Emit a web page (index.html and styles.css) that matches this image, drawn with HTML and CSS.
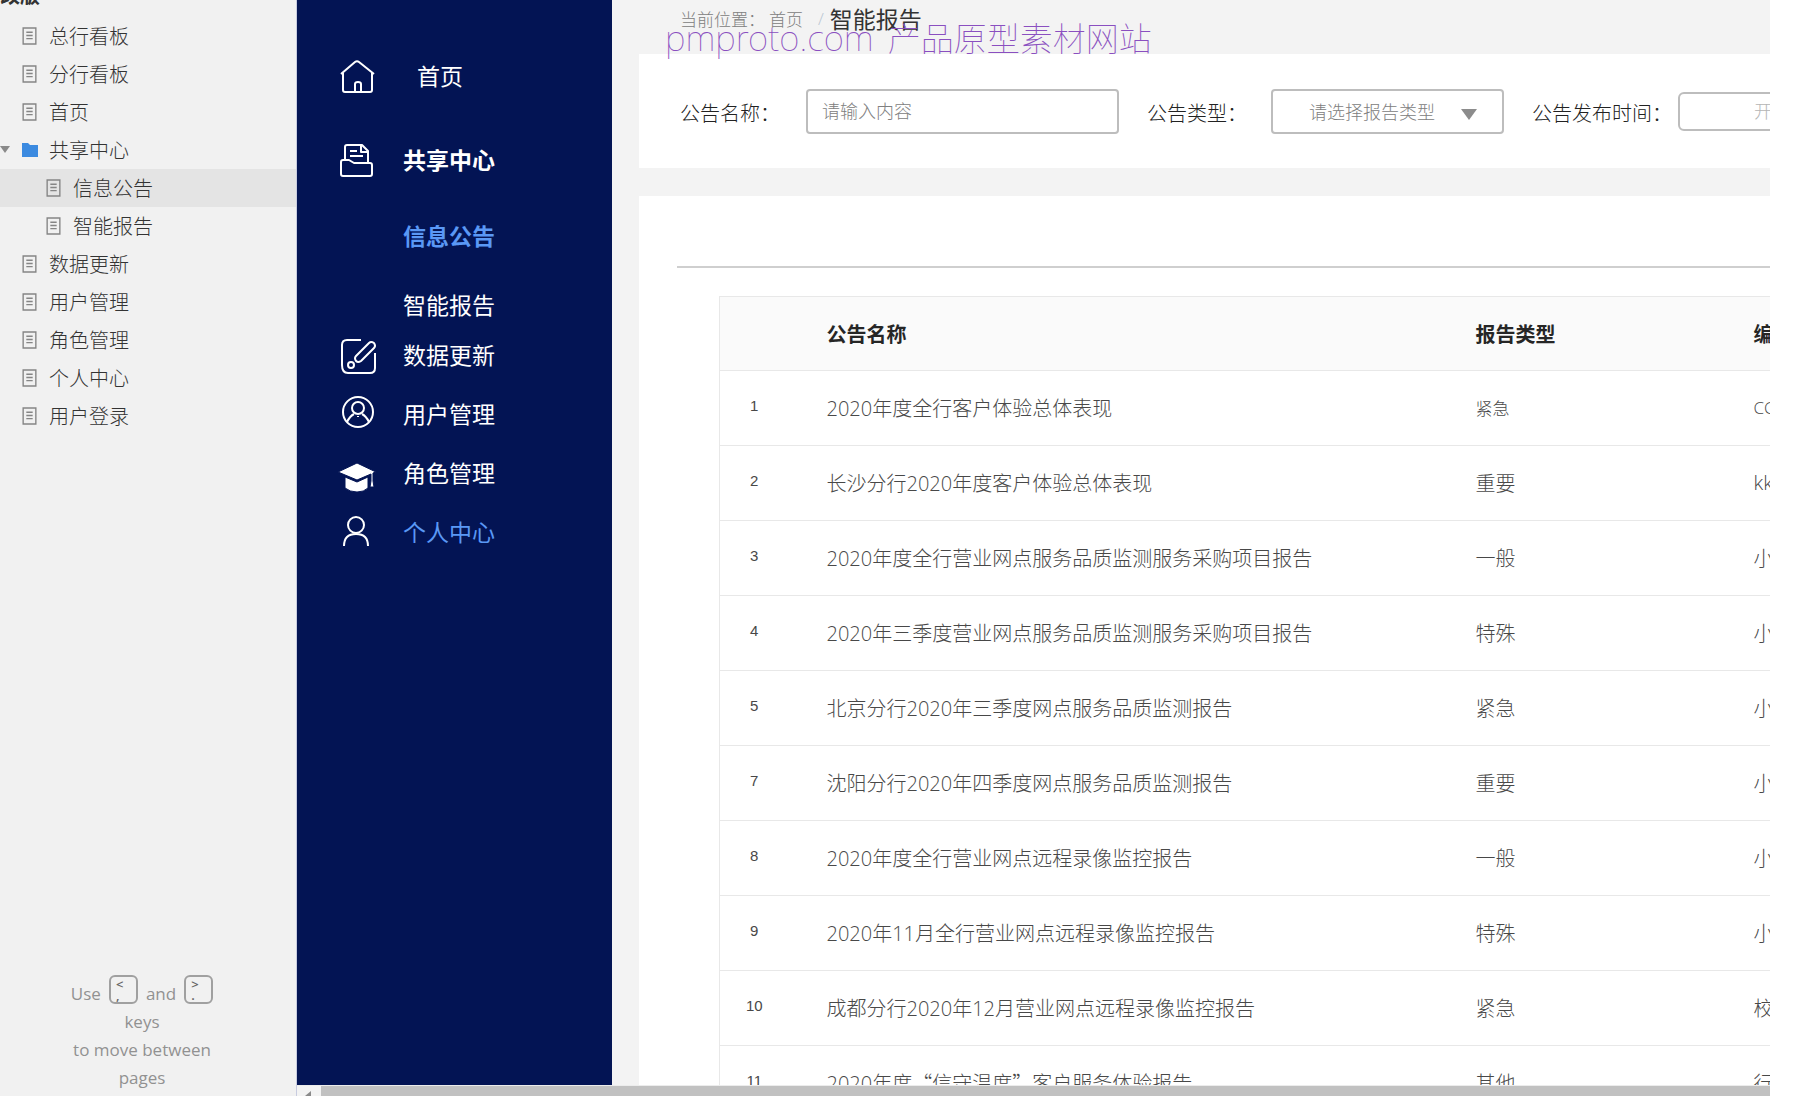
FILE: index.html
```html
<!DOCTYPE html>
<html lang="zh-CN">
  <head>
    <meta charset="UTF-8" />
    <meta name="viewport" content="width=device-width, initial-scale=1.0" />
    <title>信息公告</title>
    <link rel="stylesheet" href="styles.css">
  </head>
  <body>
    <!-- shared icons for the page tree -->
    <svg class="sprite" aria-hidden="true">
      <symbol id="page" viewBox="0 0 14 17">
        <path d="M1 1h12v15H1zM4 5h6M4 8h6M4 11h6" fill="none" stroke="currentColor" stroke-width="1.3" />
      </symbol>
    </svg>

    <aside class="tree">
      <h1 class="tree-title">改版</h1>
      <ul class="tree-list">
        <li><a href="#"><svg class="page-icon"><use href="#page" /></svg>总行看板</a></li>
        <li><a href="#"><svg class="page-icon"><use href="#page" /></svg>分行看板</a></li>
        <li><a href="#"><svg class="page-icon"><use href="#page" /></svg>首页</a></li>
        <li>
          <a href="#" class="folder">
            <svg class="caret" viewBox="0 0 10 7"><path d="M0 0h10L5 7z" fill="#8a8a8a" /></svg>
            <svg class="folder-icon" viewBox="0 0 16 14"><path d="M0 0h6l2 2h8v12H0z" fill="#3b8ae0" /></svg>共享中心
          </a>
          <ul class="tree-sub">
            <li><a href="#" class="selected"><svg class="page-icon"><use href="#page" /></svg>信息公告</a></li>
            <li><a href="#"><svg class="page-icon"><use href="#page" /></svg>智能报告</a></li>
          </ul>
        </li>
        <li><a href="#"><svg class="page-icon"><use href="#page" /></svg>数据更新</a></li>
        <li><a href="#"><svg class="page-icon"><use href="#page" /></svg>用户管理</a></li>
        <li><a href="#"><svg class="page-icon"><use href="#page" /></svg>角色管理</a></li>
        <li><a href="#"><svg class="page-icon"><use href="#page" /></svg>个人中心</a></li>
        <li><a href="#"><svg class="page-icon"><use href="#page" /></svg>用户登录</a></li>
      </ul>
      <div class="key-hint">
        <div class="key-line">Use <kbd><span>&lt;</span><span>,</span></kbd> and <kbd><span>&gt;</span><span>.</span></kbd></div>
        <div>keys</div>
        <div>to move between</div>
        <div>pages</div>
      </div>
    </aside>

    <div class="frame">
      <div class="view">
        <nav class="menu">
          <a href="#" class="item tall home">
            <svg viewBox="0 0 38 38"><path d="M3 17 17 5q2-1.500 4 0L36 17M5 16v17q0 2 2 2h25q2 0 2-2V16M17 35v-8q0-2 3-2t3 2v8" /></svg>
            <span>首页</span>
          </a>
          <a href="#" class="item tall bold">
            <svg viewBox="0 0 38 38"><path d="M3 21q0-2 2-2h6l5 3h16q2 0 2 2v9q0 2-2 2H5q-2 0-2-2zM7 19V6q0-2 2-2h15l6 6v12M23 4v7h7M12 10h7M12 15h13" /></svg>
            <span>共享中心</span>
          </a>
          <div class="submenu">
            <a href="#" class="bold current">信息公告</a>
            <a href="#">智能报告</a>
          </div>
          <a href="#" class="item">
            <svg viewBox="0 0 38 38"><path d="M23 4H9Q4 4 4 9v20q0 8 6 8h22q5 0 5-5V17" /><path d="m18 20 13-13q2-2 5 0 2 3 0 5L23 25q-3 2-5 0-2-3 0-5z" /><circle cx="13" cy="29" r="3" /></svg>
            <span>数据更新</span>
          </a>
          <a href="#" class="item">
            <svg viewBox="0 0 38 38"><circle cx="20" cy="17" r="15" /><circle cx="20" cy="13" r="6" /><path d="M9 27q3-6 7-8M31 27q-3-6-7-8M20 21v1" /></svg>
            <span>用户管理</span>
          </a>
          <a href="#" class="item">
            <svg viewBox="0 0 38 38"><path class="solid" d="m0 18 19-9 19 9-3 1v8l1 6h-4l1-6v-7l-14 6z" /><path class="solid" d="M7 23l12 5 11-5v11q-4 4-11 4T7 34z" /></svg>
            <span>角色管理</span>
          </a>
          <a href="#" class="item profile">
            <svg viewBox="0 0 38 38"><circle cx="18" cy="12" r="8" /><path d="M6 33q0-12 12-12t12 12" /></svg>
            <span>个人中心</span>
          </a>
        </nav>

        <main class="content">
          <div class="crumbs">
            <span>当前位置：</span>
            <a href="#">首页</a>
            <span class="slash">/</span>
            <strong>智能报告</strong>
            <div class="watermark"><span class="site">pmproto.com</span><span>产品原型素材网站</span></div>
          </div>

          <form class="filters">
            <label for="name">公告名称：</label>
            <input type="text" id="name" class="name-input" placeholder="请输入内容" />
            <label for="type">公告类型：</label>
            <div class="select-box">
              <select id="type">
                <option>请选择报告类型</option>
                <option>紧急</option>
                <option>重要</option>
                <option>一般</option>
                <option>特殊</option>
              </select>
              <svg viewBox="0 0 16 11"><path d="M0 0h16L8 11z" fill="#8c8c8c" /></svg>
            </div>
            <label for="date">公告发布时间：</label>
            <input type="text" id="date" class="date-input" placeholder="开始日期" />
          </form>

          <section class="panel">
            <div class="panel-head"></div>
            <table>
              <colgroup>
                <col class="col-no" />
                <col />
                <col class="col-type" />
                <col class="col-code" />
              </colgroup>
              <thead>
                <tr><th></th><th>公告名称</th><th>报告类型</th><th>编号</th></tr>
              </thead>
              <tbody>
                <tr><td>1</td><td>2020年度全行客户体验总体表现</td><td class="small">紧急</td><td class="small">CC</td></tr>
                <tr><td>2</td><td>长沙分行2020年度客户体验总体表现</td><td>重要</td><td>kk</td></tr>
                <tr><td>3</td><td>2020年度全行营业网点服务品质监测服务采购项目报告</td><td>一般</td><td>小</td></tr>
                <tr><td>4</td><td>2020年三季度营业网点服务品质监测服务采购项目报告</td><td>特殊</td><td>小</td></tr>
                <tr><td>5</td><td>北京分行2020年三季度网点服务品质监测报告</td><td>紧急</td><td>小</td></tr>
                <tr><td>7</td><td>沈阳分行2020年四季度网点服务品质监测报告</td><td>重要</td><td>小</td></tr>
                <tr><td>8</td><td>2020年度全行营业网点远程录像监控报告</td><td>一般</td><td>小</td></tr>
                <tr><td>9</td><td>2020年11月全行营业网点远程录像监控报告</td><td>特殊</td><td>小</td></tr>
                <tr><td>10</td><td>成都分行2020年12月营业网点远程录像监控报告</td><td>紧急</td><td>校</td></tr>
                <tr><td>11</td><td>2020年度<span class="quoted">“信守温度”</span>客户服务体验报告</td><td>其他</td><td>行</td></tr>
              </tbody>
            </table>
          </section>
        </main>
      </div>
      <div class="scrollbar">
        <svg viewBox="0 0 24 10"><path d="M14 5v5H8z" fill="#8a8a8a" /></svg>
        <div class="thumb"></div>
      </div>
    </div>
  </body>
</html>
```

FILE: styles.css
```css
* {
  margin: 0;
  padding: 0;
  box-sizing: border-box;
}

body {
  display: flex;
  height: 100vh;
  padding-right: 32px;
  overflow: hidden;
  background: #fff;
  color: #484848;
  font-family: "Open Sans", "Noto Sans CJK SC", sans-serif;
  font-size: 20px;
  font-weight: 300;
}

a {
  color: inherit;
  text-decoration: none;
}

ul {
  list-style: none;
}

.sprite {
  position: absolute;
  width: 0;
  height: 0;
}

/* Page tree */
.tree {
  display: flex;
  flex-direction: column;
  flex: none;
  width: 297px;
  background: #f1f1f1;
  border-right: 1px solid #c8cce0;
  color: #333;
}

.tree-title {
  display: flex;
  align-items: flex-end;
  height: 17px;
  padding-bottom: 10px;
  overflow: hidden;
  font-size: 20px;
  line-height: 22px;
  color: #333;
}

.tree-list a {
  display: flex;
  align-items: center;
  height: 38px;
  padding: 0 0 1px 22px;
}

.tree-list .tree-sub a {
  padding-left: 46px;
}

.tree-list a.folder {
  padding-left: 0;
}

.tree-list a.selected {
  background: #e4e4e4;
}

.page-icon {
  width: 15px;
  height: 18px;
  margin: 1px 12px 0 0;
  color: #858585;
}

.caret {
  width: 10px;
  height: 7px;
  margin-right: 12px;
}

.folder-icon {
  width: 16px;
  height: 14px;
  margin-right: 11px;
}

.key-hint {
  margin-top: auto;
  padding: 0 12px 4px 0;
  text-align: center;
  font-size: 17px;
  font-weight: 400;
  line-height: 28px;
  color: #919191;
}

.key-line {
  display: flex;
  justify-content: center;
  gap: 8px;
}

kbd {
  display: flex;
  flex-direction: column;
  width: 29px;
  height: 29px;
  margin-top: -5px;
  padding: 2px 0 0 5px;
  border: 2px solid #a0a0a0;
  border-radius: 6px;
  font-family: inherit;
  font-size: 13px;
  font-weight: 600;
  line-height: 11px;
  text-align: left;
  color: #666;
}

/* Prototype frame */
.frame {
  display: flex;
  flex-direction: column;
  flex: 1;
  min-width: 0;
}

.view {
  display: flex;
  flex: 1;
  min-height: 0;
  background: #f3f3f3;
}

.menu {
  flex: none;
  width: 315px;
  padding-top: 34px;
  background: #031454;
  color: #fff;
  font-size: 23px;
  font-weight: 400;
}

.item {
  display: flex;
  align-items: center;
  gap: 27px;
  height: 59px;
  padding-left: 41px;
}

.item.tall {
  height: 84px;
}

.item span {
  padding-bottom: 2px;
}

.item svg {
  width: 38px;
  height: 38px;
  fill: none;
  stroke: #fff;
  stroke-width: 2;
  stroke-linejoin: round;
}

.item .solid {
  fill: #fff;
  stroke: #031454;
  stroke-width: 1;
}

.item.home span {
  padding-left: 14px;
}

.bold {
  font-weight: 700;
}

.submenu {
  display: flex;
  flex-direction: column;
  gap: 29px;
  padding: 14px 0 0 106px;
}

.submenu a {
  height: 40px;
  line-height: 40px;
}

.submenu .current,
.item.profile span {
  color: #5a98f5;
}

/* Main content */
.content {
  display: flex;
  flex-direction: column;
  flex: 1;
  min-width: 0;
  margin-left: 27px;
  overflow: hidden;
}

.crumbs {
  position: relative;
  display: flex;
  align-items: center;
  flex: none;
  height: 54px;
  padding: 0 0 18px 41px;
  font-size: 17px;
  color: #808080;
}

.crumbs .slash {
  margin: 0 6px 0 15px;
  color: #b9c6d2;
}

.crumbs strong {
  font-size: 23px;
  font-weight: 400;
  color: #333;
}

.crumbs a {
  margin-left: 4px;
}

.watermark {
  position: absolute;
  top: 14px;
  left: 26px;
  display: flex;
  align-items: baseline;
  gap: 14px;
  font-family: "Noto Sans", "Noto Sans CJK SC", sans-serif;
  font-size: 33px;
  font-weight: 100;
  line-height: 48px;
  white-space: nowrap;
  color: #8a4fc0;
}

.watermark .site {
  font-size: 35px;
}

.filters {
  display: flex;
  align-items: center;
  flex: none;
  height: 114px;
  padding-left: 41px;
  background: #fff;
}

.filters label {
  flex: none;
  padding-top: 3px;
  color: #222;
}

.filters input,
.filters select {
  height: 45px;
  border: 2px solid #bdbdbd;
  border-radius: 4px;
  background: #fff;
  font: inherit;
  font-size: 18px;
  color: #808080;
}

.filters ::placeholder {
  color: #808080;
}

.filters .name-input {
  flex: none;
  width: 313px;
  margin: 0 28px 0 26px;
  padding-left: 14px;
}

.select-box {
  position: relative;
  flex: none;
  margin: 0 28px 0 24px;
}

.select-box select {
  width: 233px;
  padding: 2px 0 0 36px;
  appearance: none;
}

.select-box svg {
  position: absolute;
  top: 20px;
  right: 27px;
  width: 16px;
  height: 11px;
  pointer-events: none;
}

.filters .date-input {
  flex: none;
  width: 240px;
  height: 39px;
  margin-left: 6px;
  padding-left: 74px;
  border-radius: 6px;
}

.filters .date-input::placeholder {
  color: #b5b5b5;
}

.panel {
  flex: 1;
  min-height: 0;
  margin-top: 28px;
  overflow: hidden;
  background: #fff;
}

.panel-head {
  height: 72px;
  margin-left: 38px;
  border-bottom: 2px solid #cfcfcf;
}

/* The table runs past the right edge of the view */
table {
  width: calc(100% + 120px);
  margin: 28px 0 0 80px;
  table-layout: fixed;
  border-collapse: collapse;
  border: 1px solid #e8e8e8;
}

.col-no {
  width: 107px;
}

.col-type {
  width: 278px;
}

.col-code {
  width: 216px;
}

th,
td {
  height: 75px;
  padding-bottom: 1px;
  border-bottom: 1px solid #e8e8e8;
  text-align: left;
  white-space: nowrap;
}

th {
  height: 74px;
  background: #fafafa;
  font-weight: 700;
  color: #262626;
}

td:first-child {
  padding: 0 38px 6px 0;
  text-align: center;
  font-family: "Liberation Sans", sans-serif;
  font-size: 15px;
  font-weight: 400;
}

td.small {
  font-size: 17px;
}

/* full-width quotation marks */
.quoted {
  font-family: "Noto Sans CJK SC", sans-serif;
}

/* Horizontal scrollbar */
.scrollbar {
  display: flex;
  flex: none;
  height: 11px;
  border-top: 1px solid #ececec;
  background: #f3f3f3;
}

.scrollbar svg {
  width: 24px;
  height: 10px;
}

.thumb {
  flex: 1;
  background: #c1c1c1;
}
```
